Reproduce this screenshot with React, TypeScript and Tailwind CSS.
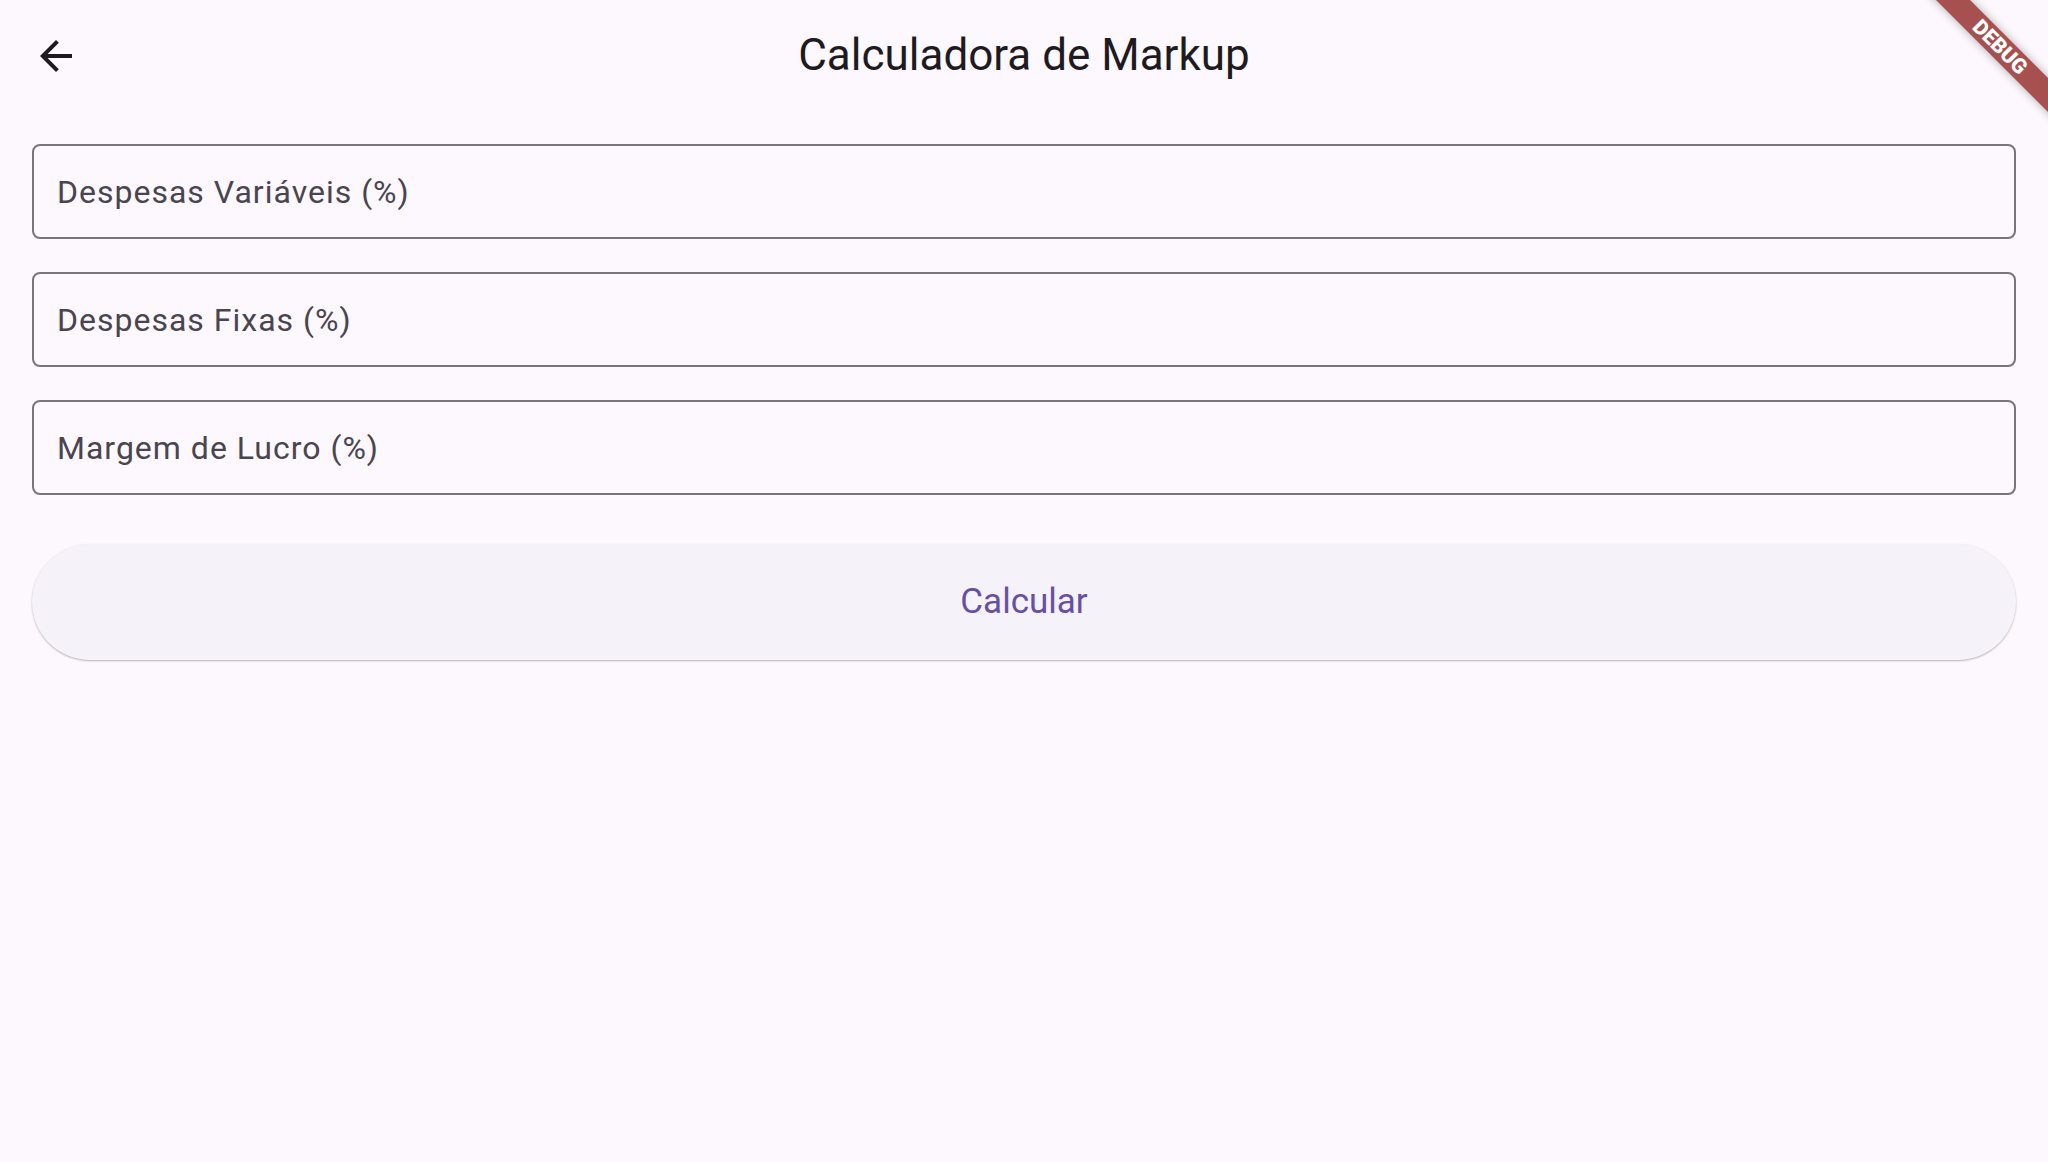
import React from "react";

const fields = ["Despesas Variáveis (%)", "Despesas Fixas (%)", "Margem de Lucro (%)"];

const App = () => {
  return (
    <div className="relative w-[2048px] h-[1162px] overflow-hidden bg-[#fdf7fe] font-['Roboto',sans-serif]">
      {/* app bar */}
      <div className="grid grid-cols-[112px_1fr_112px] h-[112px] items-center">
        <button className="flex items-center justify-center w-[112px] h-[112px]">
          <svg width="48" height="48" viewBox="0 0 24 24" fill="#1d1b20">
            <path d="M20 11H7.83l5.59-5.59L12 4l-8 8 8 8 1.41-1.41L7.83 13H20v-2z" />
          </svg>
        </button>
        <h1 className="text-center text-[44px] leading-none text-[#1d1b20] pb-[2px]">Calculadora de Markup</h1>
        <div />
      </div>

      <div className="flex flex-col px-[32px] pt-[32px]">
        <div className="flex flex-col gap-[33px]">
          {fields.map(function (label: string, idx: number) {
            return (
              <div
                key={idx}
                className="flex items-center h-[95px] border-2 border-[#79747e] rounded-[8px] px-[23px]"
              >
                <span className="text-[32px] tracking-[1px] text-[#49454f]">{label}</span>
              </div>
            );
          })}
        </div>

        <button className="mt-[49px] h-[116px] w-full rounded-full bg-[#f5f2f9] shadow-[0_1px_2px_rgba(0,0,0,0.28)] flex items-center justify-center">
          <span className="text-[35px] text-[#6750a4]">Calcular</span>
        </button>
      </div>

      {/* debug banner */}
      <div className="absolute left-[1880px] top-[35px] w-[240px] h-[24px] rotate-45 bg-[#a65050] shadow-[0_0_10px_rgba(0,0,0,0.3)] flex items-center justify-center">
        <span className="text-[21px] font-black leading-none text-white">DEBUG</span>
      </div>
    </div>
  );
};

export default App;
